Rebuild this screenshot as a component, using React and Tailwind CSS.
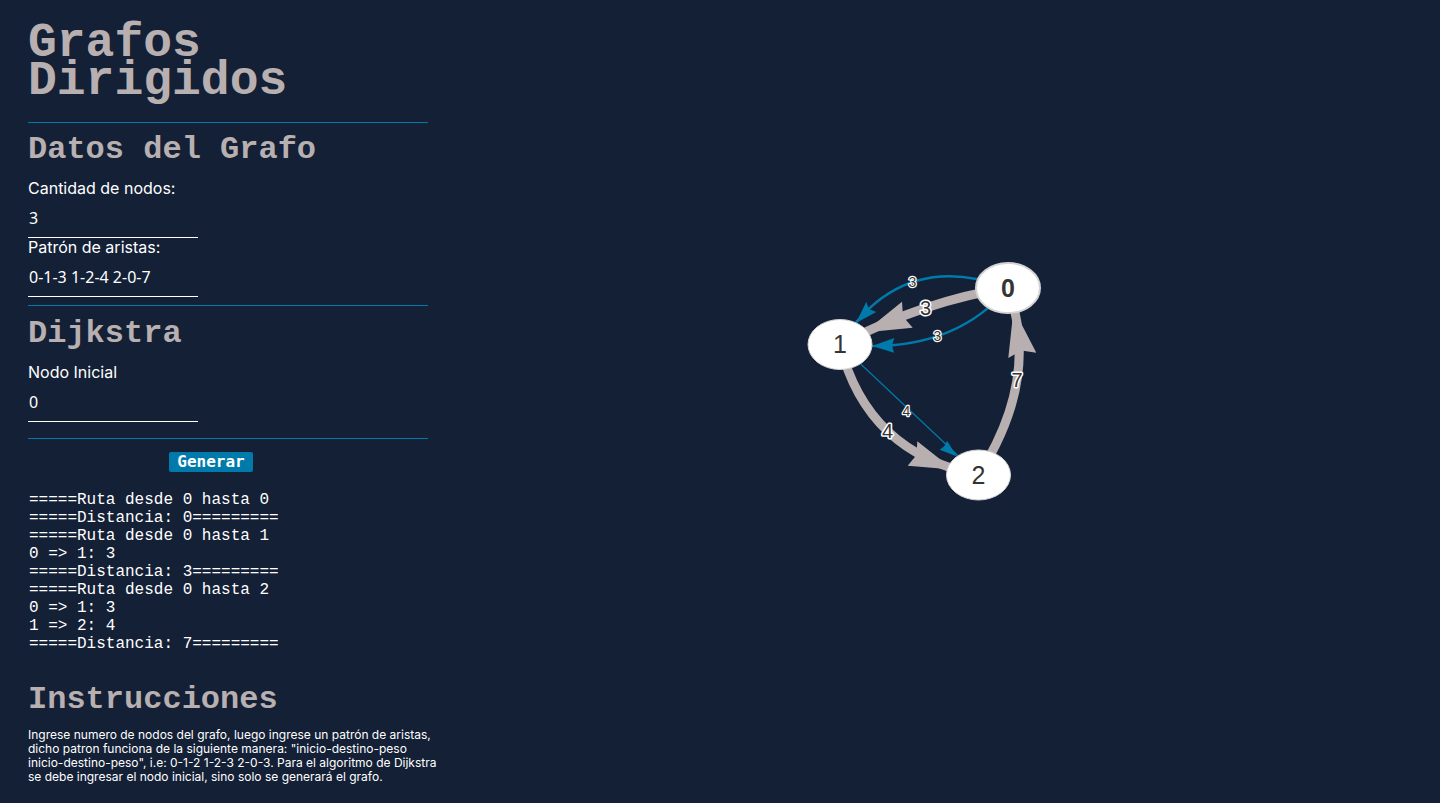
import { useState } from "react";

const heading = "font-['Liberation_Mono',monospace] font-bold text-[#b8b0b0]";

function Field({ id, label, value, onChange }) {
  return (
    <div className="flex flex-col items-start">
      <label htmlFor={id} className="text-base leading-[19px]">
        {label}
      </label>
      <input
        id={id}
        type="text"
        value={value}
        onChange={(e) => onChange(e.target.value)}
        className="h-10 w-[170px] border-b border-white bg-transparent px-px font-['Noto_Sans',sans-serif] text-base text-white outline-none"
      />
    </div>
  );
}

const nodes = [
  { id: "0", x: 1008, y: 288, bold: true },
  { id: "1", x: 840, y: 344.5 },
  { id: "2", x: 978.5, y: 475 },
];

const edges = [
  { d: "M1008 288Q901 248 840 344.5", color: "#007aaa", width: 2.4, head: "856,323 866.3,301.7 868.8,309 876.3,312" },
  { d: "M1008 288Q951 356 840 344.5", color: "#007aaa", width: 2.4, head: "872,346 894.3,338 892,345.5 894,352.7" },
  { d: "M840 344.5L978.5 475", color: "#007aaa", width: 1.2, head: "957,456.5 947,440.7 944.5,446 939.7,449.7" },
  { d: "M1008 288Q926 300 840 344.5", color: "#b8b0b0", width: 9, head: "864,332.5 902,301.7 903,316.5 912.7,327.7" },
  { d: "M840 344.5Q866.75 453.25 978.5 475", color: "#b8b0b0", width: 9, head: "953,469.5 917.3,441.3 916.5,455 907.7,465.7" },
  { d: "M978.5 475Q1040.75 378.5 1008 288", color: "#b8b0b0", width: 9, head: "1013.6,309 1008.3,358 1021.4,350.6 1036.3,352.7" },
];

const weights = [
  { text: "3", x: 912.5, y: 282, size: 14 },
  { text: "3", x: 937.5, y: 336, size: 14 },
  { text: "4", x: 906.5, y: 411, size: 14 },
  { text: "3", x: 925.5, y: 308, size: 20 },
  { text: "4", x: 887.5, y: 431, size: 20 },
  { text: "7", x: 1017, y: 380, size: 20 },
];

function Graph() {
  return (
    <svg
      width="260"
      height="260"
      viewBox="794 251 260 260"
      role="img"
      aria-label="Grafo"
      fontFamily="'Liberation Sans', Arial, sans-serif"
      textAnchor="middle"
      fill="#343434"
    >
      {edges.map((e) => (
        <g key={e.d}>
          <path d={e.d} fill="none" stroke={e.color} strokeWidth={e.width} />
          <polygon points={e.head} fill={e.color} />
        </g>
      ))}
      {weights.map((w) => (
        <text
          key={`${w.x}-${w.y}`}
          x={w.x}
          y={w.y + w.size * 0.36}
          fontSize={w.size}
          stroke="#ffffff"
          strokeWidth={w.size > 14 ? 3 : 2.4}
          strokeLinejoin="round"
          paintOrder="stroke"
        >
          {w.text}
        </text>
      ))}
      {nodes.map((n) => (
        <g key={n.id}>
          <ellipse
            cx={n.x}
            cy={n.y}
            rx="32"
            ry="25"
            fill="#ffffff"
            stroke="#d3d3d3"
            strokeWidth={n.bold ? 2 : 1}
          />
          <text x={n.x} y={n.y + 8.5} fontSize="25" fontWeight={n.bold ? 700 : 400}>
            {n.id}
          </text>
        </g>
      ))}
    </svg>
  );
}

const routes = `=====Ruta desde 0 hasta 0
=====Distancia: 0=========
=====Ruta desde 0 hasta 1
0 => 1: 3
=====Distancia: 3=========
=====Ruta desde 0 hasta 2
0 => 1: 3
1 => 2: 4
=====Distancia: 7=========`;

export default function App() {
  const [count, setCount] = useState("3");
  const [pattern, setPattern] = useState("0-1-3 1-2-4 2-0-7");
  const [start, setStart] = useState("0");

  return (
    <div className="flex min-h-screen bg-[#142036] font-[Inter,sans-serif] text-white">
      <aside className="w-[428px] shrink-0 pt-6 pb-4 pl-7">
        <h1 className={`${heading} text-5xl leading-[38px]`}>
          Grafos
          <br />
          Dirigidos
        </h1>

        <form onSubmit={(e) => e.preventDefault()}>
          <section className="mt-[22px] border-t border-[#007aaa] pt-3">
            <h2 className={`${heading} text-[32px] leading-[30px]`}>Datos del Grafo</h2>
            <div className="mt-3.5">
              <Field id="count" label="Cantidad de nodos:" value={count} onChange={setCount} />
              <Field id="pattern" label="Patrón de aristas:" value={pattern} onChange={setPattern} />
            </div>
          </section>

          <section className="mt-2 border-t border-[#007aaa] pt-[13px]">
            <h2 className={`${heading} text-[32px] leading-[30px]`}>Dijkstra</h2>
            <div className="mt-3.5">
              <Field id="start" label="Nodo Inicial" value={start} onChange={setStart} />
            </div>
          </section>

          <div className="mt-4 flex justify-center border-t border-[#007aaa] pt-[13px] pr-[34px]">
            <button
              type="submit"
              className="h-5 rounded-xs bg-[#007aaa] px-2 font-['DejaVu_Sans_Mono',monospace] text-base leading-5 font-bold"
            >
              Generar
            </button>
          </div>
        </form>

        <pre className="mt-[19px] pl-px font-['Liberation_Mono',monospace] text-base leading-[18px]">
          {routes}
        </pre>

        <section className="mt-8">
          <h2 className={`${heading} text-[32px] leading-[30px]`}>Instrucciones</h2>
          <p className="mt-[13px] text-xs leading-[14px] whitespace-nowrap">
            Ingrese numero de nodos del grafo, luego ingrese un patrón de aristas,
            <br />
            dicho patron funciona de la siguiente manera: "inicio-destino-peso
            <br />
            inicio-destino-peso", i.e: 0-1-2 1-2-3 2-0-3. Para el algoritmo de Dijkstra
            <br />
            se debe ingresar el nodo inicial, sino solo se generará el grafo.
          </p>
        </section>
      </aside>

      <main className="flex flex-1 items-start justify-center pt-[251px] pr-5">
        <Graph />
      </main>
    </div>
  );
}
